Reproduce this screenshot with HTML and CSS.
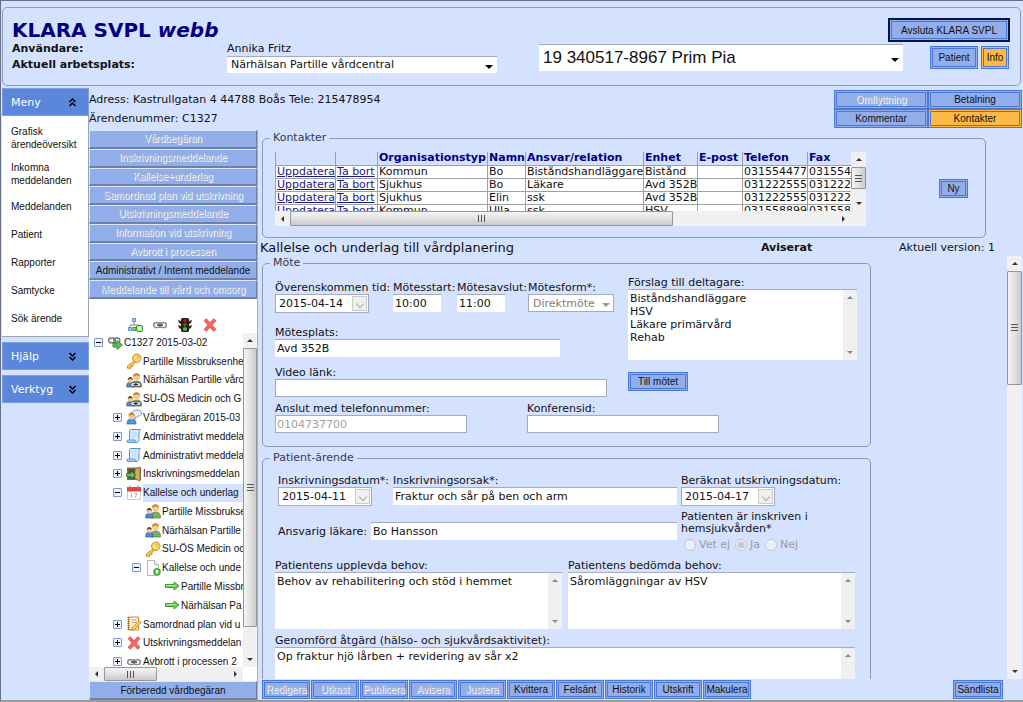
FILE: index.html
```html
<!DOCTYPE html>
<html lang="sv">
<head>
<meta charset="utf-8">
<title>KLARA SVPL webb</title>
<link rel="stylesheet" href="styles.css">
</head>
<body>
<svg class="defs" aria-hidden="true">
  <symbol id="i-link" viewBox="0 0 16 16"><g fill="none" stroke="#888" stroke-width="1.5"><rect x="1.7" y="5.7" width="6.5" height="4.8" rx="2.3"/><rect x="7.8" y="5.7" width="6.5" height="4.8" rx="2.3"/></g><path d="M5 8h6" stroke="#444" stroke-width="1.5"/></symbol>
  <symbol id="i-map" viewBox="0 0 16 16"><path d="M7 5v3M3 11V8h9v3" fill="none" stroke="#888"/><rect x="5.500" y="1.500" width="3" height="3" fill="#9cc8f5" stroke="#5c9cd8"/><rect x="1.500" y="10.500" width="3" height="3" fill="#9cc8f5" stroke="#5c9cd8"/><rect x="6" y="10.500" width="3" height="3" fill="#8edb7a" stroke="#3c9030"/><rect x="9.500" y="8.500" width="6" height="6" rx="1.500" fill="#b4eba4" stroke="#2f9a2a"/><path d="M12.500 10v3M11 11.500h3" stroke="#fff"/></symbol>
  <symbol id="i-light" viewBox="0 0 16 16"><path d="M1 3l3 1v3L2 6zM15 3l-3 1v3l2-1zM1 8l3 1v3l-2-1zM15 8l-3 1v3l2-1z" fill="#3b2620"/><rect x="4" y="1" width="8" height="14" rx="1.500" fill="#2a1c18"/><circle cx="8" cy="3.700" r="1.800" fill="#8a2a22"/><circle cx="8" cy="7.800" r="1.800" fill="#6a5a20"/><circle cx="8" cy="12" r="2.100" fill="#2fd03a"/></symbol>
  <symbol id="i-x" viewBox="0 0 16 16"><path d="M3 2.500l10 11M13 2.500l-10 11" stroke="#d84a46" stroke-width="3.600"/><path d="M3 2.500l10 11M13 2.500l-10 11" stroke="#fa6a62" stroke-width="2.400"/></symbol>
  <symbol id="i-linkgo" viewBox="0 0 16 16"><g fill="none" stroke="#777" stroke-width="1.500"><rect x="1.700" y="4" width="6.500" height="4.800" rx="2.300"/><rect x="6.800" y="4" width="6" height="4.800" rx="2.300"/></g><path d="M6 9h4V6.500l5.500 4.500-5.500 4.500V13H6z" fill="#5cc04a" stroke="#2c8420" stroke-width=".8"/></symbol>
  <symbol id="i-key" viewBox="0 0 16 16"><path d="M8 8L1.500 13v2.200h3.200v-2h2.300v-2l2.500-2z" fill="#ffd052" stroke="#c8861a"/><circle cx="10.800" cy="5.200" r="4.200" fill="#ffdc70" stroke="#c8861a"/><circle cx="12" cy="4" r="1.200" fill="#fff" stroke="#c8861a" stroke-width=".7"/></symbol>
  <symbol id="i-group" viewBox="0 0 16 16"><path d="M6 15c0-5 1.500-6 4.500-6s5 1 5 6z" fill="#7fb060" stroke="#4a7a35" stroke-width=".7"/><circle cx="10.500" cy="5" r="3.400" fill="#f6c990"/><path d="M7 5c-.5-5 7.500-5 7 0-1.500-2-5-2-7 0z" fill="#c98428"/><path d="M.7 15c0-4 1-4.700 3.600-4.700S8 11 8 15z" fill="#4f88d8" stroke="#2f5fa5" stroke-width=".7"/><circle cx="4.300" cy="8.300" r="2.500" fill="#f6c990"/><path d="M1.800 8c0-4 5-4 5 0-1.500-1.300-3.500-1.300-5 0z" fill="#6a4020"/></symbol>
  <symbol id="i-grouplink" viewBox="0 0 16 16"><use href="#i-group"/><g fill="#ddd" stroke="#555"><rect x="4.500" y="10.500" width="5.500" height="4" rx="2"/><rect x="9.500" y="10.500" width="5.500" height="4" rx="2"/></g><path d="M7.500 12.500h4.500" stroke="#333"/></symbol>
  <symbol id="i-comment" viewBox="0 0 16 16"><path d="M6.500 4c0-4 9-4 9 0 0 2.500-2 3-4 3.200L9 10V7C7.500 6.500 6.500 5.500 6.500 4z" fill="#e8f3ff" stroke="#6a9bd0" stroke-linejoin="round"/><path d="M1 15c0-4 1.500-5 4.500-5S10 11 10 15z" fill="#4f94e0" stroke="#2f5fa5" stroke-width=".7"/><circle cx="5.500" cy="7.500" r="3" fill="#f6c990"/><path d="M2.500 7c0-5 6-5 6 0-2-1.500-4-1.500-6 0z" fill="#c98428"/></symbol>
  <symbol id="i-script" viewBox="0 0 16 16"><path d="M4.500 1.500h10c-1.500 1-1.500 2-1.500 3v7c0 2-1 3-2.500 3H1.500c1.500-1 2-2 2-3V3c0-.8.300-1.500 1-1.500z" fill="#d5e9ff" stroke="#5a94d0"/><path d="M1.500 14.500c-.8-1-.8-2 0-2.500H9c0 1 .5 2.500 2 2.500z" fill="#aed2fa" stroke="#5a94d0"/><path d="M5.500 4.500h5M5.500 6.500h5M5.500 8.500h5" stroke="#c4dcf5"/></symbol>
  <symbol id="i-door" viewBox="0 0 16 16"><path d="M1 1.500h14V14H1z" fill="#7c6a48"/><path d="M2.500 3H9v10H2.500z" fill="#4c5446"/><path d="M9 3l5-2v14l-5-2z" fill="#d9a860" stroke="#94652a" stroke-width=".8"/><path d="M.5 7.500H5V5l4.500 4L5 13v-2.500H.5z" fill="#63c74e" stroke="#23771a" stroke-width=".8"/></symbol>
  <symbol id="i-cal" viewBox="0 0 16 16"><path d="M1.500 2.500h13v12h-13z" fill="#fff" stroke="#ccc"/><path d="M1 2h14v4.500H1z" fill="#e2443a"/><path d="M4 .5v3M12 .5v3" stroke="#999" stroke-width="1.300"/><path d="M5.500 8.500v4M8 8.800h3l-1.800 3.900" fill="none" stroke="#aaa"/></symbol>
  <symbol id="i-page" viewBox="0 0 16 16"><path d="M2.500.5h7l4 4v11h-11z" fill="#fff" stroke="#b5b5b5"/><path d="M9.500.5v4h4" fill="#eee" stroke="#b5b5b5"/><circle cx="12" cy="11.800" r="3.800" fill="#3fae3a"/><path d="M12 9.300l2.300 2.500h-1.400v2h-1.800v-2H9.700z" fill="#fff"/></symbol>
  <symbol id="i-arrow" viewBox="0 0 16 16"><path d="M1.500 6.500H10V4l5 4-5 4V9.500H1.500z" fill="#6fce5e" stroke="#3a9a30"/><path d="M2.500 7.500H11" stroke="#b8f0aa"/></symbol>
  <symbol id="i-note" viewBox="0 0 16 16"><path d="M2.500 1h10v13h-10z" fill="#fff2dc" stroke="#cf8a4a"/><path d="M2.500 1v13" stroke="#b3462a" stroke-width="2" stroke-dasharray="1 1"/><path d="M5.500 4h5M5.500 6.500h5" stroke="#b9a58a"/><path d="M5.500 14.500l1-3 6.500-7 2.200 2-6.700 7z" fill="#ffd052" stroke="#bd7a1c" stroke-width=".8"/></symbol>
  <symbol id="i-down2" viewBox="0 0 9 9"><path d="M1.500 1l3 3 3-3M1.500 5l3 3 3-3" fill="none" stroke="currentColor" stroke-width="1.500"/></symbol>
  <symbol id="i-up2" viewBox="0 0 9 9"><path d="M1.500 4l3-3 3 3M1.500 8l3-3 3 3" fill="none" stroke="currentColor" stroke-width="1.500"/></symbol>
</svg>
<div class="app">
  <header class="topbar">
    <div class="identity">
      <h1>KLARA SVPL <em>webb</em></h1>
      <div class="id-row"><b>Användare:</b><span>Annika Fritz</span></div>
      <div class="id-row"><label for="workplace"><b>Aktuell arbetsplats:</b></label>
        <span class="pick"><select id="workplace"><option>Närhälsan Partille vårdcentral</option></select></span></div>
    </div>
    <div class="session">
      <button class="btn exit">Avsluta KLARA SVPL</button>
      <div class="patient-row">
        <span class="pick large"><select aria-label="Patient"><option>19 340517-8967 Prim Pia</option></select></span>
        <button class="btn tall">Patient</button>
        <button class="btn tall gold info">Info</button>
      </div>
    </div>
  </header>

  <div class="body">
    <nav class="menu">
      <button class="menu-head">Meny<svg><use href="#i-up2"/></svg></button>
      <div class="menu-list">
        <a href="#">Grafisk ärendeöversikt</a>
        <a href="#">Inkomna meddelanden</a>
        <a href="#">Meddelanden</a>
        <a href="#">Patient</a>
        <a href="#">Rapporter</a>
        <a href="#">Samtycke</a>
        <a href="#">Sök ärende</a>
      </div>
      <button class="menu-head">Hjälp<svg><use href="#i-down2"/></svg></button>
      <button class="menu-head">Verktyg<svg><use href="#i-down2"/></svg></button>
    </nav>

    <main class="main">
      <div class="summary">
        <div class="address">
          <p>Adress: Kastrullgatan 4 44788 Boås Tele: 215478954</p>
          <p>Ärendenummer: C1327</p>
        </div>
        <div class="tabs">
          <button class="btn" disabled>Omflyttning</button>
          <button class="btn">Betalning</button>
          <button class="btn">Kommentar</button>
          <button class="btn gold">Kontakter</button>
        </div>
      </div>

      <div class="work">
        <aside class="case">
          <div class="actions">
            <button disabled>Vårdbegäran</button>
            <button disabled>Inskrivningsmeddelande</button>
            <button disabled>Kallelse+underlag</button>
            <button disabled>Samordnad plan vid utskrivning</button>
            <button disabled>Utskrivningsmeddelande</button>
            <button disabled>Information vid utskrivning</button>
            <button disabled>Avbrott i processen</button>
            <button>Administrativt / Internt meddelande</button>
            <button disabled>Meddelande till vård och omsorg</button>
          </div>
          <div class="tools">
            <button aria-label="Struktur"><svg><use href="#i-map"/></svg></button>
            <button aria-label="Länk"><svg><use href="#i-link"/></svg></button>
            <button aria-label="Status"><svg><use href="#i-light"/></svg></button>
            <button aria-label="Ta bort"><svg><use href="#i-x"/></svg></button>
          </div>
          <div class="tree-box">
            <div class="tree-view">
              <ul class="tree">
                <li><i class="exp minus"></i><svg><use href="#i-linkgo"/></svg><span>C1327 2015-03-02</span></li>
                <li class="l1"><i class="exp none"></i><svg><use href="#i-key"/></svg><span>Partille Missbruksenhe</span></li>
                <li class="l1"><i class="exp none"></i><svg><use href="#i-grouplink"/></svg><span>Närhälsan Partille vårc</span></li>
                <li class="l1"><i class="exp none"></i><svg><use href="#i-grouplink"/></svg><span>SU-ÖS Medicin och G</span></li>
                <li class="l1"><i class="exp"></i><svg><use href="#i-comment"/></svg><span>Vårdbegäran 2015-03</span></li>
                <li class="l1"><i class="exp"></i><svg><use href="#i-script"/></svg><span>Administrativt meddela</span></li>
                <li class="l1"><i class="exp"></i><svg><use href="#i-script"/></svg><span>Administrativt meddela</span></li>
                <li class="l1"><i class="exp"></i><svg><use href="#i-door"/></svg><span>Inskrivningsmeddelan</span></li>
                <li class="l1 current"><i class="exp minus"></i><svg><use href="#i-cal"/></svg><span>Kallelse och underlag</span></li>
                <li class="l2"><i class="exp none"></i><svg><use href="#i-group"/></svg><span>Partille Missbrukse</span></li>
                <li class="l2"><i class="exp none"></i><svg><use href="#i-group"/></svg><span>Närhälsan Partille</span></li>
                <li class="l2"><i class="exp none"></i><svg><use href="#i-key"/></svg><span>SU-ÖS Medicin oc</span></li>
                <li class="l2"><i class="exp minus"></i><svg><use href="#i-page"/></svg><span>Kallelse och unde</span></li>
                <li class="l3"><i class="exp none"></i><svg><use href="#i-arrow"/></svg><span>Partille Missbr</span></li>
                <li class="l3"><i class="exp none"></i><svg><use href="#i-arrow"/></svg><span>Närhälsan Pa</span></li>
                <li class="l1"><i class="exp"></i><svg><use href="#i-note"/></svg><span>Samordnad plan vid u</span></li>
                <li class="l1"><i class="exp"></i><svg><use href="#i-x"/></svg><span>Utskrivningsmeddelan</span></li>
                <li class="l1"><i class="exp"></i><svg><use href="#i-link"/></svg><span>Avbrott i processen 2</span></li>
              </ul>
            </div>
            <div class="vbar tree-v"><i class="tri up"></i><i class="thumb"></i><i class="rest"></i><i class="tri down"></i></div>
            <div class="hbar tree-h"><i class="tri left"></i><i class="thumb"></i><i class="rest"></i><i class="tri right"></i></div>
          </div>
          <button class="btn prepared">Förberedd vårdbegäran</button>
        </aside>

        <section class="detail">
          <fieldset class="contacts">
            <legend>Kontakter</legend>
            <div class="grid-box">
              <div class="grid-view">
                <table>
                  <colgroup><col class="c1"><col class="c2"><col class="c3"><col class="c4"><col class="c5"><col class="c6"><col class="c7"><col class="c8"><col class="c9"></colgroup>
                  <thead><tr><th></th><th></th><th>Organisationstyp</th><th>Namn</th><th>Ansvar/relation</th><th>Enhet</th><th>E-post</th><th>Telefon</th><th>Fax</th></tr></thead>
                  <tbody>
                    <tr><td><a href="#">Uppdatera</a></td><td><a href="#">Ta bort</a></td><td>Kommun</td><td>Bo</td><td>Biståndshandläggare</td><td>Bistånd</td><td></td><td>031554477</td><td>031554</td></tr>
                    <tr><td><a href="#">Uppdatera</a></td><td><a href="#">Ta bort</a></td><td>Sjukhus</td><td>Bo</td><td>Läkare</td><td>Avd 352B</td><td></td><td>031222555</td><td>031222</td></tr>
                    <tr><td><a href="#">Uppdatera</a></td><td><a href="#">Ta bort</a></td><td>Sjukhus</td><td>Elin</td><td>ssk</td><td>Avd 352B</td><td></td><td>031222555</td><td>031222</td></tr>
                    <tr><td><a href="#">Uppdatera</a></td><td><a href="#">Ta bort</a></td><td>Kommun</td><td>Ulla</td><td>ssk</td><td>HSV</td><td></td><td>031558899</td><td>031558</td></tr>
                  </tbody>
                </table>
              </div>
              <div class="vbar grid-v"><i class="tri up"></i><i class="thumb"></i><i class="rest"></i><i class="tri down"></i></div>
              <div class="hbar grid-h"><i class="tri left"></i><i class="thumb"></i><i class="rest"></i><i class="tri right"></i></div>
              <i class="corner"></i>
            </div>
            <button class="btn new">Ny</button>
          </fieldset>

          <div class="heading">
            <h2>Kallelse och underlag till vårdplanering</h2>
            <b>Aviserat</b>
            <span>Aktuell version: 1</span>
          </div>

          <div class="scroller">
            <form class="forms">
              <fieldset class="meeting">
                <legend>Möte</legend>
                <div class="meeting-cols">
                  <div class="meeting-left">
                    <div class="times">
                      <div class="f"><label for="date">Överenskommen tid:</label><span class="date"><input id="date" value="2015-04-14"><button type="button" aria-label="Välj datum"></button></span></div>
                      <div class="f"><label for="start">Mötesstart:</label><input class="time" id="start" value="10:00"></div>
                      <div class="f"><label for="end">Mötesavslut:</label><input class="time" id="end" value="11:00"></div>
                      <div class="f"><label for="kind">Mötesform*:</label><span class="pick off"><select id="kind" disabled><option>Direktmöte</option></select></span></div>
                    </div>
                    <div class="f place"><label for="place">Mötesplats:</label><input id="place" value="Avd 352B"></div>
                    <div class="f"><label for="video">Video länk:</label><input class="boxed" id="video"></div>
                  </div>
                  <div class="meeting-right">
                    <div class="f"><label for="who">Förslag till deltagare:</label>
                      <div class="area list"><textarea id="who">Biståndshandläggare
HSV
Läkare primärvård
Rehab</textarea><div class="vbar idle"><i class="tri up"></i><i class="rest"></i><i class="tri down"></i></div></div></div>
                    <button type="button" class="btn go">Till mötet</button>
                  </div>
                </div>
                <div class="phones">
                  <div class="f"><label for="phone">Anslut med telefonnummer:</label><input class="boxed" id="phone" value="0104737700" disabled></div>
                  <div class="f"><label for="conf">Konferensid:</label><input class="boxed" id="conf"></div>
                </div>
              </fieldset>

              <fieldset class="patient">
                <legend>Patient-ärende</legend>
                <div class="admission">
                  <div class="f"><label for="in">Inskrivningsdatum*:</label><span class="date"><input id="in" value="2015-04-11"><button type="button" aria-label="Välj datum"></button></span></div>
                  <div class="f"><label for="why">Inskrivningsorsak*:</label><input id="why" value="Fraktur och sår på ben och arm"></div>
                  <div class="f"><label for="out">Beräknat utskrivningsdatum:</label><span class="date"><input id="out" value="2015-04-17"><button type="button" aria-label="Välj datum"></button></span></div>
                  <div class="doctor"><label for="doc">Ansvarig läkare:</label><input id="doc" value="Bo Hansson"></div>
                  <div class="home" role="radiogroup" aria-labelledby="home-label">
                    <p id="home-label">Patienten är inskriven i hemsjukvården*</p>
                    <div class="radios">
                      <input type="radio" name="home" id="h1" disabled><label for="h1">Vet ej</label>
                      <input type="radio" name="home" id="h2" disabled checked><label for="h2">Ja</label>
                      <input type="radio" name="home" id="h3" disabled><label for="h3">Nej</label>
                    </div>
                  </div>
                </div>
                <div class="needs">
                  <div class="f"><label for="n1">Patientens upplevda behov:</label><div class="area"><textarea id="n1">Behov av rehabilitering och stöd i hemmet</textarea><div class="vbar idle"><i class="tri up"></i><i class="rest"></i><i class="tri down"></i></div></div></div>
                  <div class="f"><label for="n2">Patientens bedömda behov:</label><div class="area"><textarea id="n2">Såromläggningar av HSV</textarea><div class="vbar idle"><i class="tri up"></i><i class="rest"></i><i class="tri down"></i></div></div></div>
                </div>
                <div class="f measures"><label for="n3">Genomförd åtgärd (hälso- och sjukvårdsaktivitet):</label><div class="area"><textarea id="n3">Op fraktur hjö lårben + revidering av sår x2</textarea><div class="vbar idle"><i class="tri up"></i><i class="rest"></i><i class="tri down"></i></div></div></div>
              </fieldset>
            </form>
            <div class="vbar page-v"><i class="tri up"></i><i class="thumb"></i><i class="rest"></i><i class="tri down"></i></div>
          </div>

          <footer class="commands">
            <button class="btn" disabled>Redigera</button>
            <button class="btn" disabled>Utkast</button>
            <button class="btn" disabled>Publicera</button>
            <button class="btn" disabled>Avisera</button>
            <button class="btn" disabled>Justera</button>
            <button class="btn">Kvittera</button>
            <button class="btn">Felsänt</button>
            <button class="btn">Historik</button>
            <button class="btn">Utskrift</button>
            <button class="btn">Makulera</button>
            <button class="btn send">Sändlista</button>
          </footer>
        </section>
      </div>
    </main>
  </div>
</div>
</body>
</html>
```
FILE: styles.css
```css
* { box-sizing: border-box; }
body {
  margin: 0;
  background: #d5e2ff;
  color: #111;
  font: 11px/13px "DejaVu Sans", Verdana, sans-serif;
}
h1, h2, p, ul { margin: 0; padding: 0; font-weight: normal; }
button, input, select, textarea { font: inherit; color: inherit; margin: 0; border-radius: 0; }
a { color: #1a1a8c; }
.defs { position: absolute; width: 0; height: 0; }

.app {
  height: 100vh;
  display: flex;
  flex-direction: column;
  overflow: hidden;
  border-top: 1px solid #66708a;
  border-left: 1px solid #66708a;
  border-bottom: 2px solid #9a9a9a;
}

/* buttons */
.btn {
  height: 19px;
  padding: 0 2px;
  border: 3px double #4a78d4;
  background: #92aeea;
  font: 10px/13px "Liberation Sans", Arial, sans-serif;
  white-space: nowrap;
}
.btn.gold { background: #fdb945; }
.btn.tall { height: 23px; width: 48px; }
button:disabled { color: #a9b6d2; text-shadow: 1px 1px 0 #fff; }

/* header */
.topbar {
  display: flex;
  gap: 42px;
  height: 79px;
  flex: none;
  margin: 6px 2px 2px 1px;
  padding: 10px 10px 0 9px;
  border: 1px solid #8d9cb4;
  border-radius: 5px;
}
.identity { width: 485px; }
.identity h1 { font-size: 20px; line-height: 24px; font-weight: bold; color: #000080; }
.id-row { display: grid; grid-template-columns: 215px 1fr; line-height: 14px; }
.id-row label { line-height: 18px; }
.session { flex: 1; display: flex; flex-direction: column; align-items: flex-end; }
.exit { width: 122px; height: 24px; border: 2px solid #0a1440; outline: 1px solid #4a78d4; outline-offset: -4px; }
.patient-row { display: flex; align-self: stretch; align-items: center; gap: 3px; padding: 2px 1px 0 0; }
.patient-row .info { width: 28px; }

/* drop-downs */
.pick { position: relative; display: flex; }
.pick select {
  appearance: none;
  width: 100%;
  height: 17px;
  padding: 0 4px;
  border: 0;
  border-top: 1px solid #a3abbd;
  background: #fff;
}
.pick::after {
  content: "";
  position: absolute;
  right: 4px;
  top: 50%;
  border: 4px solid transparent;
  border-top-color: #000;
  border-bottom: 0;
}
.pick.large { flex: 1; margin-right: 24px; }
.pick.large select { height: 27px; padding: 0 4px; font: 17px/24px "Liberation Sans", Arial, sans-serif; }
.pick.off select { height: 18px; border: 1px solid #a3abbd; color: #808080; opacity: 1; }
.pick.off::after { border-top-color: #999; }

/* left menu */
.body { flex: 1; min-height: 0; display: flex; }
.menu { width: 88px; flex: none; padding-left: 1px; }
.menu-head {
  display: flex;
  align-items: center;
  justify-content: space-between;
  width: 100%;
  height: 28px;
  margin-top: 5px;
  padding: 0 11px 0 8px;
  border: 1px solid #7f9fdf;
  background: #5a86dc;
  color: #fff;
}
.menu-head:first-child { margin-top: 0; }
.menu-head svg { width: 9px; height: 9px; color: #000; }
.menu-list {
  display: flex;
  flex-direction: column;
  gap: 10px;
  padding: 9px 7px 9px 9px;
  background: #fff;
  border-right: 1px solid #9aa3b5;
  border-bottom: 1px solid #9aa3b5;
  font-family: "Liberation Sans", Arial, sans-serif;
  font-size: 10px;
}
.menu-list a { color: #111; text-decoration: none; min-height: 18px; display: flex; align-items: center; }

/* case summary */
.main { flex: 1; min-width: 0; display: flex; flex-direction: column; }
.summary { height: 42px; flex: none; display: flex; justify-content: space-between; }
.address { display: grid; grid-auto-rows: 19px; align-content: start; padding-top: 5px; }
.tabs { display: grid; grid-template-columns: 94px 94px; grid-auto-rows: 19px; padding: 2px 1px 0 0; }
.work { flex: 1; min-height: 0; display: flex; }

/* case column */
.case {
  width: 169px;
  flex: none;
  display: flex;
  flex-direction: column;
  background: #fff;
  border-right: 1px solid #9fb2dc;
}
.actions { display: grid; grid-template-columns: minmax(0, 1fr); grid-auto-rows: 1fr; height: 169px; flex: none; }
.actions button, .prepared {
  min-height: 0;
  height: auto;
  padding: 0;
  border: 1px solid #dde6fb;
  border-right-color: #6b7da6;
  border-bottom: 2px solid #6f81aa;
  background: #92aeea;
  font: 10px/13px "Liberation Sans", Arial, sans-serif;
  white-space: nowrap;
}
.tools { height: 34px; flex: none; display: flex; align-items: flex-end; gap: 9px; padding-left: 38px; }
.tools button { border: 0; background: none; padding: 0; height: 17px; }
.tools svg, .tree svg { width: 16px; height: 16px; display: block; flex: none; }
.tree-box { flex: 1; min-height: 0; display: grid; grid-template: 1fr 14px / 1fr 14px; }
.tree-view { overflow: hidden; min-height: 0; }
.tree {
  display: grid;
  grid-auto-rows: 1fr;
  height: 338px;
  list-style: none;
  font-family: "Liberation Sans", Arial, sans-serif;
  font-size: 10px;
}
.tree li { display: flex; align-items: center; padding-left: 5px; white-space: nowrap; }
.tree .l1 { padding-left: 24px; }
.tree .l2 { padding-left: 43px; }
.tree .l3 { padding-left: 62px; }
.tree svg { margin: 0 1px 0 4px; }
.tree .current span { flex: 1; background: #d5e2ff; line-height: 18px; }
.exp {
  width: 9px;
  height: 9px;
  flex: none;
  border: 1px solid #7b9ac8;
  border-radius: 1px;
  background:
    linear-gradient(#000, #000) center / 5px 1px no-repeat,
    linear-gradient(#000, #000) center / 1px 5px no-repeat,
    #eef4ff;
}
.exp.minus { background: linear-gradient(#000, #000) center / 5px 1px no-repeat, #eef4ff; }
.exp.none { visibility: hidden; }
.prepared { height: 19px; flex: none; }

/* scroll bars */
.vbar, .hbar { display: flex; background: #f0f0f0; }
.vbar { flex-direction: column; width: 15px; }
.tri { flex: none; width: 15px; height: 15px; display: grid; place-items: center; }
.tri::before { content: ""; border: 3px solid transparent; }
.tri.up::before { border-bottom-color: #333; border-top: 0; }
.tri.down::before { border-top-color: #333; border-bottom: 0; }
.tri.left::before { border-right-color: #333; border-left: 0; }
.tri.right::before { border-left-color: #333; border-right: 0; }
.idle .tri::before { opacity: .55; }
.rest { flex: 1; }
.thumb { border: 1px solid #979797; border-radius: 1px; display: grid; place-items: center; }
.vbar .thumb { background: linear-gradient(90deg, #f4f4f4, #e2e2e2 50%, #cacaca); }
.hbar .thumb { background: linear-gradient(#f4f4f4, #e2e2e2 50%, #cacaca); }
.vbar .thumb::before { content: ""; width: 7px; height: 7px; background: repeating-linear-gradient(#555 0 1px, transparent 1px 3px); }
.hbar .thumb::before { content: ""; width: 7px; height: 7px; background: repeating-linear-gradient(90deg, #555 0 1px, transparent 1px 3px); }
.tree-v { width: 14px; }
.tree-v .tri { width: 14px; }
.tree-v .thumb { flex: 11; }
.hbar .tri { height: 100%; }
.tree-h .thumb { flex: 13; }
.tree-h .rest { flex: 18; }

/* detail */
.detail { flex: 1; min-width: 0; display: flex; flex-direction: column; }
fieldset {
  margin: 0;
  min-width: 0;
  border: 1px solid #8d99ae;
  border-radius: 5px;
}
legend { padding: 0 3px; margin-left: 0; color: #333a4d; line-height: 14px; }
.contacts {
  flex: none;
  display: flex;
  justify-content: space-between;
  align-items: flex-start;
  height: 107px;
  margin: 1px 37px 1px 4px;
  padding: 7px 17px 0 12px;
}
.contacts legend { margin-left: -5px; }
.grid-box { width: 591px; display: grid; grid-template: 59px 15px / 1fr 15px; }
.grid-view { overflow: hidden; min-width: 0; background: #fff; }
.grid-v .thumb { flex: none; height: 22px; }
.grid-h .thumb { flex: 7; }
.grid-h .rest { flex: 3; }
.corner { background: #f0f0f0; }
table { border-collapse: collapse; table-layout: fixed; width: 576px; }
th, td { height: 13px; padding: 0 0 0 1px; border: 1px solid #a0a0a0; line-height: 12px; text-align: left; white-space: nowrap; overflow: hidden; }
th { background: #d5e2ff; color: #000080; border-top: 0; }
.c1 { width: 60px; } .c2 { width: 42px; } .c3 { width: 110px; } .c4 { width: 38px; } .c5 { width: 118px; }
.c6 { width: 54px; } .c7 { width: 45px; } .c8 { width: 65px; } .c9 { width: 44px; }
.new { width: 29px; margin-top: 27px; }

.heading { display: grid; grid-template-columns: 501px 138px 1fr; align-items: center; height: 17px; flex: none; padding-left: 2px; }
.heading h2 { font-size: 13px; line-height: 17px; }

.scroller { flex: 1; min-height: 0; display: flex; justify-content: space-between; padding-left: 4px; }
.page-v .thumb { flex: 2; }
.page-v .rest { flex: 5; }
.page-v { margin-right: 1px; }
.forms { width: 609px; overflow: hidden; }
.f { display: flex; flex-direction: column; align-items: flex-start; }
.f > label { white-space: nowrap; }
input:not([type]) {
  height: 18px;
  width: 100%;
  padding: 0 2px;
  border: 0;
  border-top: 1px solid #a3abbd;
  background: #fff;
}
input.boxed:not([type]) { border: 1px solid #a3abbd; padding: 0 1px; }
input:disabled { color: #a0a0a0; }
input.time:not([type]) { width: 48px; }
.date { display: flex; width: 94px; height: 19px; border: 1px solid #a3abbd; background: #fff; }
.date input:not([type]) { border: 0; height: 17px; padding: 0 3px; flex: 1; min-width: 0; }
.date button { width: 15px; height: 15px; margin: 1px; padding: 0; border: 1px solid #ccc; background: #f0f0f0; display: grid; place-items: center; }
.date button::before { content: ""; width: 5px; height: 5px; border: solid #aaa; border-width: 0 1px 1px 0; transform: rotate(45deg); }
.area { display: flex; height: 57px; border-top: 1px solid #a3abbd; background: #fff; width: 100%; }
.area textarea { flex: 1; min-width: 0; border: 0; padding: 2px 2px 0; background: none; resize: none; outline: 0; overflow: hidden; }
.area .vbar { width: 14px; }
.area .tri { width: 14px; }

.meeting { padding: 6px 13px 13px 12px; }
.meeting legend, .patient legend { margin-left: -5px; }
.meeting-cols { display: flex; justify-content: space-between; }
.meeting-left { width: 340px; display: flex; flex-direction: column; gap: 9px; }
.times { display: grid; grid-template-columns: 118px 64px 71px 1fr; padding: 5px 0 4px; }
.times .pick { width: 86px; }
.place input:not([type]) { width: 285px; }
.f #video { width: 332px; }
.meeting-right { width: 229px; display: flex; flex-direction: column; gap: 12px; align-items: flex-start; }
.meeting-right .f { width: 100%; }
.area.list { height: 71px; }
.go { width: 60px; }
.phones { display: grid; grid-template-columns: 252px 1fr; padding-top: 5px; }
.phones input { max-width: 192px; }

.patient { margin-top: 4px; padding: 9px 15px 13px 12px; }
.admission { display: grid; grid-template-columns: 115px 284px 1fr; padding-left: 3px; }
.admission > .f:nth-child(3), .home { padding-left: 4px; }
.doctor { grid-column: span 2; display: grid; grid-template-columns: 93px 1fr; align-items: center; height: 18px; margin-top: 16px; }
.home { padding-top: 5px; line-height: 12px; }
.home p { max-width: 150px; }
.radios { display: flex; align-items: center; height: 20px; color: #9a9a9a; padding-left: 3px; }
.radios input { width: 12px; height: 12px; margin: 0 3px 0 0; }
.radios label { margin-right: 5px; }
.needs { display: grid; grid-template-columns: 287px 287px; gap: 6px; padding-top: 4px; }
.measures { padding-top: 5px; }

.commands { display: flex; gap: 1px; flex: none; padding: 1px 20px 1px 4px; }
.commands .btn { width: 48px; padding: 0; }
.commands .send { width: 50px; margin-left: auto; }
```
